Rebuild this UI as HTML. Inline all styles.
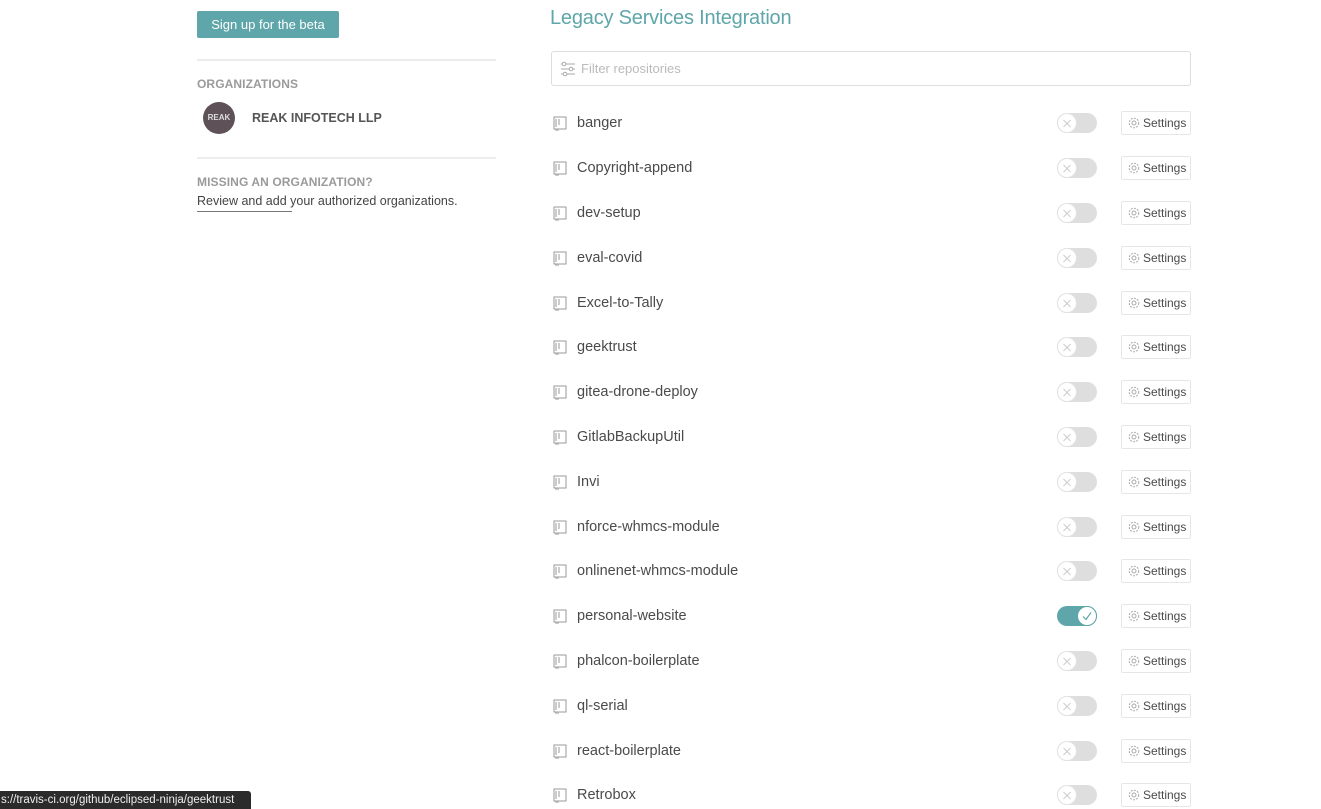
<!DOCTYPE html>
<html><head><meta charset="utf-8"><style>
*{box-sizing:border-box;margin:0;padding:0}
body{width:1321px;height:809px;background:#fff;font-family:"Liberation Sans",sans-serif;position:relative;overflow:hidden;color:#606060}
.btn{position:absolute;left:197px;top:11px;width:142px;height:27px;background:#5ea6a9;color:#fff;border-radius:2px;font-size:13px;line-height:27px;text-align:center}
.hr{position:absolute;left:197px;width:299px;height:2px;background:#ececec}
.h{position:absolute;left:197px;font-size:12px;font-weight:bold;color:#9a9a9a;letter-spacing:.1px}
.av{position:absolute;left:203px;top:102px;width:32px;height:32px;border-radius:50%;background:#5e5258;color:#ddd;font-size:8px;line-height:32px;text-align:center;font-weight:bold}
.org{position:absolute;left:252px;top:111px;font-size:12.5px;font-weight:bold;color:#555}
.rev{position:absolute;left:197px;top:194px;font-size:12.5px;color:#444}
.ul{position:absolute;left:197px;top:211px;width:95px;height:1px;background:#777}
.title{position:absolute;left:550px;top:7px;font-size:20px;color:#5ea6a9;letter-spacing:-.2px}
.filter{position:absolute;left:551px;top:51px;width:640px;height:35px;border:1px solid #ddd;border-radius:3px}
.filter span{position:absolute;left:29px;top:9px;font-size:13px;color:#bbb}
.row{position:absolute;left:551px;height:24px;width:640px}
.ic{position:absolute;left:2px;top:5px;width:14px;height:16px}
.nm{position:absolute;left:26px;top:4px;font-size:14.5px;color:#4a4a4a}
.tg{position:absolute;left:506px;top:2px;width:40px;height:20px;border-radius:10px;background:#dedede}
.tg i{position:absolute;left:0;top:0;width:20px;height:20px;border-radius:50%;background:#fff;border:1px solid #e2e2e2}
.tg i:before,.tg i:after{content:"";position:absolute;left:4px;top:9px;width:10px;height:1px;background:#ccc;transform:rotate(45deg)}
.tg i:after{transform:rotate(-45deg)}
.tg.on{background:#5ea6a9}
.tg.on i{left:20px;border-color:#5ea6a9}
.tg.on i:before,.tg.on i:after{display:none}
.st{position:absolute;left:570px;top:0;width:70px;height:24px;border:1px solid #e6e6e6;border-radius:2px;font-size:12px;color:#4a4a4a;line-height:22px;padding-left:21px}
.st svg{position:absolute;left:6px;top:5px}
.url{position:absolute;left:0;top:791px;height:18px;width:251px;background:#2b2b2b;color:#eee;font-size:11.5px;line-height:18px;padding-left:1px;border-radius:0 3px 0 0;white-space:nowrap;overflow:hidden}
</style></head><body>
<div class="btn">Sign up for the beta</div>
<div class="hr" style="top:59px"></div>
<div class="h" style="top:77px">ORGANIZATIONS</div>
<div class="av">REAK</div>
<div class="org">REAK INFOTECH LLP</div>
<div class="hr" style="top:157px"></div>
<div class="h" style="top:175px">MISSING AN ORGANIZATION?</div>
<div class="rev">Review and add your authorized organizations.</div>
<div class="ul"></div>
<div class="title">Legacy Services Integration</div>
<div class="filter"><svg style="position:absolute;left:8px;top:9px" width="16" height="16" viewBox="0 0 16 16" fill="none" stroke="#aaa" stroke-width="1"><path d="M1 3h14M1 8h14M1 13h14"/><circle cx="4" cy="3" r="1.8" fill="#fff"/><circle cx="11" cy="8" r="1.8" fill="#fff"/><circle cx="5" cy="13" r="1.8" fill="#fff"/></svg><span>Filter repositories</span></div>

<div class="row" style="top:111px"><svg class="ic" viewBox="0 0 14 16" fill="none" stroke="#999"><rect x="1" y="1" width="12" height="12"/><path d="M3 3v8M5 4h2M5 6h2M5 8h2M3 13v2M5 13v2"/></svg><span class="nm">banger</span><div class="tg"><i></i></div><div class="st"><svg width="12" height="12" viewBox="0 0 12 12" fill="none" stroke="#aaa"><circle cx="6" cy="6" r="2"/><circle cx="6" cy="6" r="4.8" stroke-dasharray="2 1.2"/></svg>Settings</div></div>
<div class="row" style="top:156px"><svg class="ic" viewBox="0 0 14 16" fill="none" stroke="#999"><rect x="1" y="1" width="12" height="12"/><path d="M3 3v8M5 4h2M5 6h2M5 8h2M3 13v2M5 13v2"/></svg><span class="nm">Copyright-append</span><div class="tg"><i></i></div><div class="st"><svg width="12" height="12" viewBox="0 0 12 12" fill="none" stroke="#aaa"><circle cx="6" cy="6" r="2"/><circle cx="6" cy="6" r="4.8" stroke-dasharray="2 1.2"/></svg>Settings</div></div>
<div class="row" style="top:201px"><svg class="ic" viewBox="0 0 14 16" fill="none" stroke="#999"><rect x="1" y="1" width="12" height="12"/><path d="M3 3v8M5 4h2M5 6h2M5 8h2M3 13v2M5 13v2"/></svg><span class="nm">dev-setup</span><div class="tg"><i></i></div><div class="st"><svg width="12" height="12" viewBox="0 0 12 12" fill="none" stroke="#aaa"><circle cx="6" cy="6" r="2"/><circle cx="6" cy="6" r="4.8" stroke-dasharray="2 1.2"/></svg>Settings</div></div>
<div class="row" style="top:246px"><svg class="ic" viewBox="0 0 14 16" fill="none" stroke="#999"><rect x="1" y="1" width="12" height="12"/><path d="M3 3v8M5 4h2M5 6h2M5 8h2M3 13v2M5 13v2"/></svg><span class="nm">eval-covid</span><div class="tg"><i></i></div><div class="st"><svg width="12" height="12" viewBox="0 0 12 12" fill="none" stroke="#aaa"><circle cx="6" cy="6" r="2"/><circle cx="6" cy="6" r="4.8" stroke-dasharray="2 1.2"/></svg>Settings</div></div>
<div class="row" style="top:291px"><svg class="ic" viewBox="0 0 14 16" fill="none" stroke="#999"><rect x="1" y="1" width="12" height="12"/><path d="M3 3v8M5 4h2M5 6h2M5 8h2M3 13v2M5 13v2"/></svg><span class="nm">Excel-to-Tally</span><div class="tg"><i></i></div><div class="st"><svg width="12" height="12" viewBox="0 0 12 12" fill="none" stroke="#aaa"><circle cx="6" cy="6" r="2"/><circle cx="6" cy="6" r="4.8" stroke-dasharray="2 1.2"/></svg>Settings</div></div>
<div class="row" style="top:335px"><svg class="ic" viewBox="0 0 14 16" fill="none" stroke="#999"><rect x="1" y="1" width="12" height="12"/><path d="M3 3v8M5 4h2M5 6h2M5 8h2M3 13v2M5 13v2"/></svg><span class="nm">geektrust</span><div class="tg"><i></i></div><div class="st"><svg width="12" height="12" viewBox="0 0 12 12" fill="none" stroke="#aaa"><circle cx="6" cy="6" r="2"/><circle cx="6" cy="6" r="4.8" stroke-dasharray="2 1.2"/></svg>Settings</div></div>
<div class="row" style="top:380px"><svg class="ic" viewBox="0 0 14 16" fill="none" stroke="#999"><rect x="1" y="1" width="12" height="12"/><path d="M3 3v8M5 4h2M5 6h2M5 8h2M3 13v2M5 13v2"/></svg><span class="nm">gitea-drone-deploy</span><div class="tg"><i></i></div><div class="st"><svg width="12" height="12" viewBox="0 0 12 12" fill="none" stroke="#aaa"><circle cx="6" cy="6" r="2"/><circle cx="6" cy="6" r="4.8" stroke-dasharray="2 1.2"/></svg>Settings</div></div>
<div class="row" style="top:425px"><svg class="ic" viewBox="0 0 14 16" fill="none" stroke="#999"><rect x="1" y="1" width="12" height="12"/><path d="M3 3v8M5 4h2M5 6h2M5 8h2M3 13v2M5 13v2"/></svg><span class="nm">GitlabBackupUtil</span><div class="tg"><i></i></div><div class="st"><svg width="12" height="12" viewBox="0 0 12 12" fill="none" stroke="#aaa"><circle cx="6" cy="6" r="2"/><circle cx="6" cy="6" r="4.8" stroke-dasharray="2 1.2"/></svg>Settings</div></div>
<div class="row" style="top:470px"><svg class="ic" viewBox="0 0 14 16" fill="none" stroke="#999"><rect x="1" y="1" width="12" height="12"/><path d="M3 3v8M5 4h2M5 6h2M5 8h2M3 13v2M5 13v2"/></svg><span class="nm">Invi</span><div class="tg"><i></i></div><div class="st"><svg width="12" height="12" viewBox="0 0 12 12" fill="none" stroke="#aaa"><circle cx="6" cy="6" r="2"/><circle cx="6" cy="6" r="4.8" stroke-dasharray="2 1.2"/></svg>Settings</div></div>
<div class="row" style="top:515px"><svg class="ic" viewBox="0 0 14 16" fill="none" stroke="#999"><rect x="1" y="1" width="12" height="12"/><path d="M3 3v8M5 4h2M5 6h2M5 8h2M3 13v2M5 13v2"/></svg><span class="nm">nforce-whmcs-module</span><div class="tg"><i></i></div><div class="st"><svg width="12" height="12" viewBox="0 0 12 12" fill="none" stroke="#aaa"><circle cx="6" cy="6" r="2"/><circle cx="6" cy="6" r="4.8" stroke-dasharray="2 1.2"/></svg>Settings</div></div>
<div class="row" style="top:559px"><svg class="ic" viewBox="0 0 14 16" fill="none" stroke="#999"><rect x="1" y="1" width="12" height="12"/><path d="M3 3v8M5 4h2M5 6h2M5 8h2M3 13v2M5 13v2"/></svg><span class="nm">onlinenet-whmcs-module</span><div class="tg"><i></i></div><div class="st"><svg width="12" height="12" viewBox="0 0 12 12" fill="none" stroke="#aaa"><circle cx="6" cy="6" r="2"/><circle cx="6" cy="6" r="4.8" stroke-dasharray="2 1.2"/></svg>Settings</div></div>
<div class="row" style="top:604px"><svg class="ic" viewBox="0 0 14 16" fill="none" stroke="#999"><rect x="1" y="1" width="12" height="12"/><path d="M3 3v8M5 4h2M5 6h2M5 8h2M3 13v2M5 13v2"/></svg><span class="nm">personal-website</span><div class="tg on"><i><svg width="18" height="18" viewBox="0 0 18 18" style="position:absolute;left:0;top:0"><path d="M5 9.5l3 3 5-7" fill="none" stroke="#5ea6a9" stroke-width="1.2"/></svg></i></div><div class="st"><svg width="12" height="12" viewBox="0 0 12 12" fill="none" stroke="#aaa"><circle cx="6" cy="6" r="2"/><circle cx="6" cy="6" r="4.8" stroke-dasharray="2 1.2"/></svg>Settings</div></div>
<div class="row" style="top:649px"><svg class="ic" viewBox="0 0 14 16" fill="none" stroke="#999"><rect x="1" y="1" width="12" height="12"/><path d="M3 3v8M5 4h2M5 6h2M5 8h2M3 13v2M5 13v2"/></svg><span class="nm">phalcon-boilerplate</span><div class="tg"><i></i></div><div class="st"><svg width="12" height="12" viewBox="0 0 12 12" fill="none" stroke="#aaa"><circle cx="6" cy="6" r="2"/><circle cx="6" cy="6" r="4.8" stroke-dasharray="2 1.2"/></svg>Settings</div></div>
<div class="row" style="top:694px"><svg class="ic" viewBox="0 0 14 16" fill="none" stroke="#999"><rect x="1" y="1" width="12" height="12"/><path d="M3 3v8M5 4h2M5 6h2M5 8h2M3 13v2M5 13v2"/></svg><span class="nm">ql-serial</span><div class="tg"><i></i></div><div class="st"><svg width="12" height="12" viewBox="0 0 12 12" fill="none" stroke="#aaa"><circle cx="6" cy="6" r="2"/><circle cx="6" cy="6" r="4.8" stroke-dasharray="2 1.2"/></svg>Settings</div></div>
<div class="row" style="top:739px"><svg class="ic" viewBox="0 0 14 16" fill="none" stroke="#999"><rect x="1" y="1" width="12" height="12"/><path d="M3 3v8M5 4h2M5 6h2M5 8h2M3 13v2M5 13v2"/></svg><span class="nm">react-boilerplate</span><div class="tg"><i></i></div><div class="st"><svg width="12" height="12" viewBox="0 0 12 12" fill="none" stroke="#aaa"><circle cx="6" cy="6" r="2"/><circle cx="6" cy="6" r="4.8" stroke-dasharray="2 1.2"/></svg>Settings</div></div>
<div class="row" style="top:783px"><svg class="ic" viewBox="0 0 14 16" fill="none" stroke="#999"><rect x="1" y="1" width="12" height="12"/><path d="M3 3v8M5 4h2M5 6h2M5 8h2M3 13v2M5 13v2"/></svg><span class="nm">Retrobox</span><div class="tg"><i></i></div><div class="st"><svg width="12" height="12" viewBox="0 0 12 12" fill="none" stroke="#aaa"><circle cx="6" cy="6" r="2"/><circle cx="6" cy="6" r="4.8" stroke-dasharray="2 1.2"/></svg>Settings</div></div>
<div class="url">s://travis-ci.org/github/eclipsed-ninja/geektrust</div>
</body></html>
